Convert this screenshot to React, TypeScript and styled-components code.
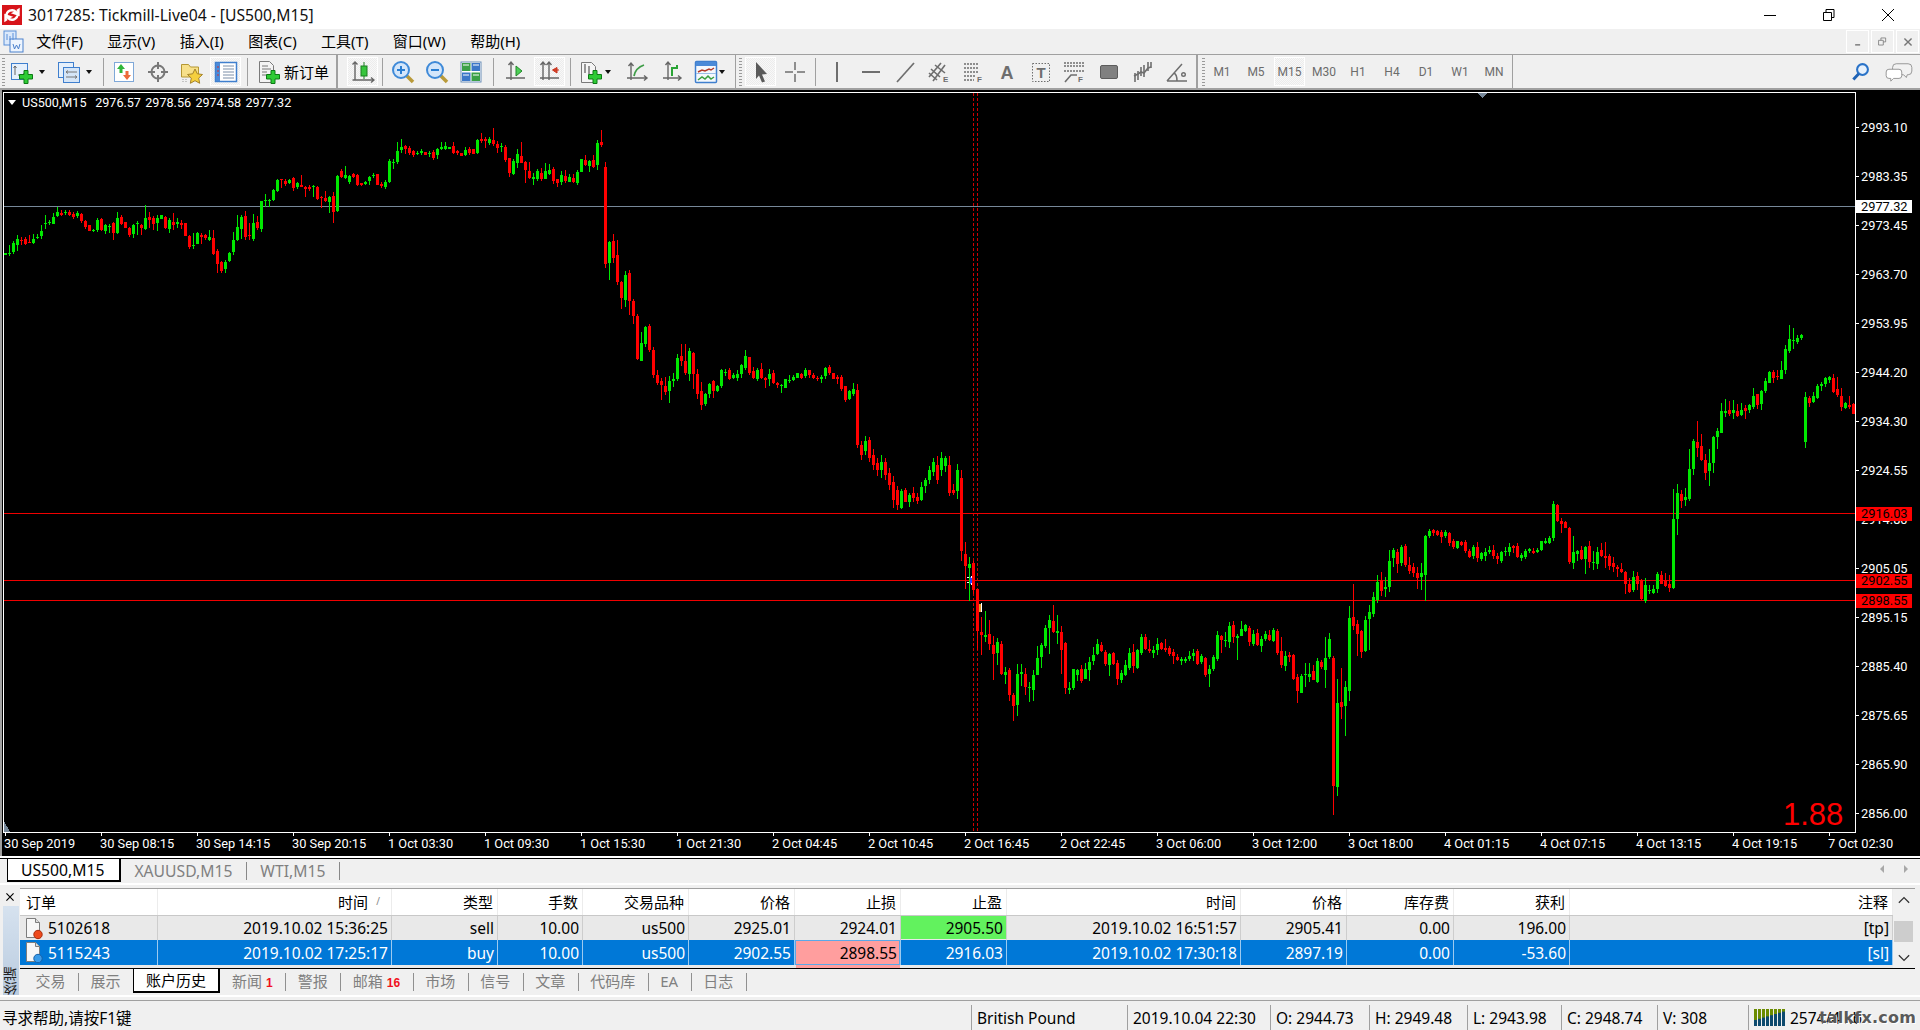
import React from 'react'
import styled, { createGlobalStyle } from 'styled-components'

const GlobalStyle = createGlobalStyle`
  html, body {
    margin: 0;
    padding: 0;
    background: #f0f0f0;
    overflow: hidden;
  }
  body {
    font-family: "Noto Sans", "Noto Sans CJK SC", sans-serif;
  }
`

/* ---------- chart data: body top-bottom, ^wick top, _wick bottom ---------- */

type Section = { k: number; y0: number; s: number; data: string }

const SECTIONS: Section[] = [
  { k: 0, y0: 90, s: 3, data: 'g490-495 g488-491^465_497 g458-487 g447-465^435_483 r449-451^440_465 r447-462^442_465 r456-460^435 g447-459^432 g441-445^432_447 g423-438^405_447 g399-401^375_417 g396-399^390_405 g381-401^370 g366-378^350 r369-374^360_378 g366-369^360_376 r366-375^360 r372-380^366 g369-378^363_384 r372-393^369_399 r393-412^390 r406-424 g419-424 g390-420^385 r388-420^385_423 g405-423^402_432 g408-411^402_429 r400-430^396_450 g384-428^366 r380-402^375_405 r396-414 r414-434^410_441 g405-432^402_444 g399-402^393_435 r406-413^403_435 g384-417^345_420 r382-390^366_414 r385-401^378_420 g383-400^375_423 g376-386 r381-413^378_417 g390-416^384_429 r397-404^369_420 g396-402^384_415 r398-405^390_417 r400-437 r438-471^435_477 g465-467^429_477 g429-461^426 r435-441^428_462 r435-444^431_450 g441-451^420_454 r444-491^420_495 r484-521^478_549 r516-543^512_549 g515-537^510_549 g489-513^486_516 g450-485^426_495 g411-450^375_453 g380-417^375_447 r378-441^363_450 r435-437^399_450 g399-447^372_453 r396-414^378_420 g333-417^332_426 g329-331^312_351 g329-332^326_351 g300-330^296 g270-303^267_306 r268-270^266_295 r273-283^268_288 g270-280^266_282 r264-293^261_303 g279-292^276_297 r286-290^255_291 r291-296^288_321 r291-296^285_303 g288-291^285_321 r291-327^288_330 r321-323^318_354 r325-332^303_336 g321-335^318_369 r318-366^306_399 g258-362^255_365 r243-261^238_264 g255-264^228_267 g258-275^255 r252-260^248_264 r255-284 r280-285^278_288 g276-282^272_285 g261-273^258_285 g255-259^249_264 r252-285 r282-288^276_294 g276-291 g213-276^208_279 g216-218^207_237 g183-216^156 g171-180^147_189 r168-178^165_192 r174-189 r183-195^180_201 g188-190^183_195 g184-190 r186-194 g188-190^183_201 r186-203 g178-195^174_207 g171-177^157_180 g168-177^156_180 g170-176 r168-189^156 r183-190^180_195 r188-197 g179-194^171_198 r177-190^171_195 r178-191 g150-189^147' },
  { k: 119, y0: 100, s: 3, data: 'r118-122^98_130 r117-122^112_143 g117-129^112_136 r119-132^84_137 r132-144^122_160 g138-140^130_155 r141-180 r174-219_230 g183-222^177 g162-190^148_204 r168-190^126 r186-209_248 r213-234^186_238 g232-237^220_254 g213-237^208_243 r220-237^205 g213-237^190 g210-221^192 r208-243_252 r237-248_260 g225-246^213_254 r228-243^210 g231-245^222 r234-246^222_250 g216-248 g177-215 r180-195^165 g183-198^180_216 r180-201^165_204 g129-195^120_210 r126-135^90_141 r201-492^186_504 g426-489_540 r423-474^402_489 r465-545^420_555 r546-594_627 g525-600^513_621 r519-603^510_645 r603-648^597_672 r648-778_781 g729-783^696 g681-732_741 r677-750 r750-825^741_834 r825-850^810_855 r843-855^834_900 r858-876^831_885 g843-873^828_909 g837-843^819_861 g774-837^762_843 r768-783^732_798 r783-819^732_825 g753-822^744_843 r759-822_867 r822-882^807_897 r873-915^846_930 g882-912_918 g852-882^849_894 r843-873^840_894 g858-873 g810-858^807_864 g816-818^807_828 r810-837^804 g825-834^819_837 g822-834^810_843 g795-822_834 g768-804^750 r771-819_825 r813-834^801_837 g810-837_843 r807-834^789_837 r834-840_864 g822-837^807_858 r819-849^810_852 r849-855_864 g854-856^852_879 g837-864 g839-842^825_849 g831-840^825_843 g819-834 r822-834 g810-828^804 r810-825_834 r825-834^819_837 r834-838 g831-836^825_849 g804-828^801_837 r801-819 r819-837 r831-837^825_852 r831-867 r858-900_906 g873-897^870_900 g867-882^849 r870-1035^852_1045' },
  { k: 214, y0: 0, s: 1, data: 'r445-455^441_460 g441-451^436_455 r440-458^437_462 r455-465^449_470 r463-470^458_476 g462-470^455_478 r462-475^458_480 r473-485^468_490 r482-500^476_508 r490-505^486_510' },
  { k: 224, y0: 480, s: 3, data: 'g33-84_88 r30-67^24 g45-66^39_81 r40-54^21_66 r51-63^39_72 g21-60^6 g0-18_39' },
  { k: 231, y0: 0, s: 1, data: 'g470-480^466_484 g462-472^458_476 r465-480^456_484 g458-470^452_476 g458-466^456_472 r465-493^456_496 r490-493^484_495 g470-491^464_499 r478-551^470_561' },
  { k: 240, y0: 560, s: 3, data: 'r-18-18^-54_87 g12-24^-9_123 r9-90_102 r87-213_270 r216-225^171_285 g225-231^153_246 r222-252^180_270 r255-282^228_360 g246-279^234_315 r252-342^243_345 g336-345^321_372 r330-405^324_423 r405-438^399_483 g342-435^312_468 g336-342^312_378 r342-381^324_405 g381-384^366_426 g345-390^330_423 g294-345^258 g255-291^249_324 g204-258^195_264 g180-204^165_282 r183-216^135_219 g213-219^165_252 r216-270^198_342 r249-384_402 g384-390^366_402 g327-384_390 g330-345^327_363 r327-363^315 g327-357^309 g306-330^291_363 g285-303^261_315 g252-282^237_285 r255-273^246 r276-312 g282-315^279_348 r279-312 r309-357^300_375 g339-360^330_369 g315-345^300 g279-324^264 r276-318^252_339 g270-324 g231-279^222 r231-267^222_270 r267-273^240_279 g270-279^258_294 g252-270^234_285 r249-267 r264-270^237 r264-282^258_288 r276-288^267_312 r291-300^282_303 g297-303^291_315 g297-303^291_309 g288-297^273 g279-288^267_303 r273-312^267 g288-306^282_312 r294-345^291_351 g327-342^315_381 g291-327_333 g225-297^213_303 r228-240^225_279 g239-241^216_261 g198-246^186_264 r195-231^183_249 g228-234^222_300 g207-228^183 g195-213^192 r204-246_258 g222-252^210_258 r219-255^207 g237-258^228_276 g222-237^213_243 r225-240^210 g210-243_246 r213-279^207_285 r273-315^231_324 g288-318^273_333 r285-291^276_306 r285-357 r351-393^342_429 g348-399^342 g341-343^309_381 g342-351^309_366 r333-360^315 g303-366^294 r306-321^300_327 g294-330^231_384 g237-291^219_297 r294-678_765 g429-681^357_708 r426-441^324_477 g381-438^363_528 g174-393^138_423 r171-198^72_210 r192-222^180_288 r213-276^210_294 g180-273^168_276 g156-177^135_270 g111-162^96_171 g66-120^45_129 r63-93^36_108 g81-87^51_111 g3-81^-30_96' },
  { k: 347, y0: 0, s: 1, data: 'g550-558_567 r552-564^549_573' },
  { k: 349, y0: 310, s: 3, data: 'g711-759^705_768 r708-765_771 r765-783^741_792 r771-789^759_801 r789-804^771_837 g789-801^759_840 g678-795^675_873 g663-678^657_684 r660-669^657_678 r663-675^660 r666-681_699 g666-678^660_684 r669-699^666_708 r693-711 g693-714_717 r696-705^693_708 r696-723 r723-741^717_744 g711-738^705_747 r711-744^696_756 g729-747^726_753 g726-738^714_753 g720-726^708_732 r720-738^705_747 r738-747^729_762 g726-753^723 g723-726^711_738 g711-726^699_738 r708-714^705_729 r708-741^699_744 g735-744^729_753 g723-741_747 g717-723^714_729 r723-729^714 g720-726^714_729 g693-720_723 g693-699^684_702 g684-699_702 g582-684^573_693 r585-633_636 r633-641^624_669 r636-654^633 r654-756^651_762 g726-759^678_777 g723-732^720_753 r720-747^708_750 g711-747^708_792 r708-756^693_774 g756-759^723_780 g726-762^711_777 r720-738^699_741 r738-744^696_774 r738-768_780 r759-771^741_786 r771-777^765_801 r777-786^759_789 r786-822^783_852 r822-846^804 g801-840^783 r798-822^786_840 r810-867_870 g825-873^804 g840-843^825_852 g837-849^825_852 g792-837_849 r795-822^783 r810-828^789 r822-834^795_846 g627-834^537_837 g549-627^522_675 r552-573^540_594 g561-570^534_588 g477-567^417_573 g393-477_495 r396-414^333_441 r408-450^372 r450-489^432_510 g459-483^417_528 g381-459^378_489 g363-381^354_417 g303-369^279 g303-309^267_321 r300-312^273 g300-309^270_327 r303-318^282 g300-315^279_318 r294-303^285_327 g285-300_309 g258-291^234 r252-285_297 g243-282^240_300 g213-243^204 g186-219^183 r186-204^180_219 r198-201^180_210 g180-207^153 g117-180^105_192 g87-123^45 g89-91^54_117 g84-96^75_102 g75-84^72_90 g261-396^246_414 r264-279^258_291 g258-276^246_279 g228-264^222_267 g222-228^216_243 g204-222^201_231 g201-210^198_219 r204-246^192_249 r237-255^201_261 r258-291^234_303 g279-294^276 r285-291^258 r282-312^279' },
]

type Candle = { x: number; up: boolean; top: number; height: number; hi: number; lo: number }

const CANDLES: Candle[] = SECTIONS.flatMap(({ k, y0, s, data }) =>
  data.split(' ').map((token, i) => {
    const m = token.match(/^([gr])(-?\d+)-(-?\d+)(?:\^(-?\d+))?(?:_(-?\d+))?$/)!
    const n = k + i
    const at = (v: number) => Math.round(y0 + v / s)
    const top = at(+m[2])
    const bottom = at(+m[3])
    const hi = m[4] !== undefined ? at(+m[4]) : top - (n * 7) % 3
    const lo = m[5] !== undefined ? at(+m[5]) : bottom + (n * 13) % 3
    return { x: 4 + 4 * n, up: m[1] === 'g', top, height: Math.max(1, bottom - top), hi, lo }
  }),
)

const PRICE_TICKS = ['2993.10', '2983.35', '2973.45', '2963.70', '2953.95', '2944.20', '2934.30', '2924.55', '2914.80', '2905.05', '2895.15', '2885.40', '2875.65', '2865.90', '2856.00']
const TIME_TICKS = ['30 Sep 2019', '30 Sep 08:15', '30 Sep 14:15', '30 Sep 20:15', '1 Oct 03:30', '1 Oct 09:30', '1 Oct 15:30', '1 Oct 21:30', '2 Oct 04:45', '2 Oct 10:45', '2 Oct 16:45', '2 Oct 22:45', '3 Oct 06:00', '3 Oct 12:00', '3 Oct 18:00', '4 Oct 01:15', '4 Oct 07:15', '4 Oct 13:15', '4 Oct 19:15', '7 Oct 02:30']
const RED_LEVELS = [
  { y: 513, label: '2916.03' },
  { y: 580, label: '2902.55' },
  { y: 600, label: '2898.55' },
]

/* ---------- window chrome ---------- */

const Page = styled.div`
  width: 1920px;
  height: 1030px;
  display: flex;
  flex-direction: column;
  overflow: hidden;
  background: #f0f0f0;
  color: #000;
`

const TitleBar = styled.div`
  height: 29px;
  background: #fff;
  display: flex;
  align-items: center;
  padding-left: 2px;
  flex-shrink: 0;
`

const TitleText = styled.span`
  margin-left: 6px;
  font-size: 15.7px;
  white-space: nowrap;
  color: #111;
`

const WindowButtons = styled.div`
  margin-left: auto;
  display: flex;
  padding-right: 3px;
`

const WindowButton = styled.div`
  width: 59px;
  height: 29px;
  display: flex;
  align-items: center;
  justify-content: center;
`

const MenuBar = styled.div`
  height: 25px;
  display: flex;
  align-items: center;
  flex-shrink: 0;
  padding-left: 3px;
`

const MenuItem = styled.span`
  padding: 0 12.2px;
  font-size: 15px;
  line-height: 25px;
  white-space: nowrap;
`

const MdiButtons = styled.div`
  margin-left: auto;
  display: flex;
  gap: 2px;
  padding-right: 1px;
`

const MdiButton = styled.div`
  width: 21px;
  height: 21px;
  border: 1px solid #fff;
  display: flex;
  align-items: center;
  justify-content: center;
`

const Toolbar = styled.div`
  height: 33px;
  border-top: 1px solid #a0a0a0;
  border-bottom: 2px solid #a0a0a0;
  display: flex;
  align-items: center;
  flex-shrink: 0;
`

const Grip = styled.div<{ $ml?: number }>`
  width: 3px;
  height: 28px;
  margin-left: ${(p) => p.$ml ?? 2}px;
  background: repeating-linear-gradient(to bottom, #9a9a9a 0 1px, transparent 1px 3px);
`

const Divider = styled.div<{ $ml: number; $double?: boolean }>`
  width: ${(p) => (p.$double ? 2 : 1)}px;
  height: 33px;
  margin-left: ${(p) => p.$ml}px;
  background: #a0a0a0;
`

const Sep = styled.div<{ $l: number; $r: number }>`
  width: 1px;
  height: 28px;
  margin: 0 ${(p) => p.$r}px 0 ${(p) => p.$l}px;
  background: #a0a0a0;
`

const Tool = styled.div<{ $active?: boolean; $ml?: number }>`
  box-sizing: border-box;
  width: ${(p) => (p.$active ? 31 : 34)}px;
  height: 29px;
  margin-left: ${(p) => (p.$ml ?? 0) + (p.$active ? 1 : 0)}px;
  margin-right: ${(p) => (p.$active ? 2 : 0)}px;
  display: flex;
  align-items: center;
  justify-content: center;
  flex-shrink: 0;
  font-family: Roboto, sans-serif;
  font-size: 12px;
  color: #6c6c6c;
  ${(p) =>
    p.$active &&
    `
    border: 1px solid #fff;
    background: repeating-conic-gradient(#f8f8f8 0 25%, #ececec 0 50%) 0 0 / 2px 2px;
  `}
`

const DropArrow = styled.div<{ $ml?: number }>`
  width: 0;
  height: 0;
  margin-left: ${(p) => p.$ml ?? 0}px;
  border: 3.5px solid transparent;
  border-top: 4px solid #111;
  border-bottom: 0;
  flex-shrink: 0;
`

const OrderTool = styled.div`
  width: 86px;
  height: 29px;
  display: flex;
  align-items: center;
  gap: 3px;
  padding-left: 9px;
  box-sizing: border-box;
  font-size: 15px;
  white-space: nowrap;
`

const ToolbarEnd = styled.div`
  margin-left: auto;
  display: flex;
  align-items: center;
  padding-right: 4px;
`

const Glyph = styled.svg`
  display: block;
  flex-shrink: 0;
`

/* ---------- chart ---------- */

const ChartFrame = styled.div`
  position: relative;
  height: 766px;
  flex-shrink: 0;
  background: #000;
`

const ChartSvg = styled.svg`
  display: block;
  width: 1920px;
  height: 766px;
  text {
    font-family: Roboto, sans-serif;
    font-size: 12.8px;
    fill: #fff;
    shape-rendering: auto;
  }
`

const Legend = styled.div`
  position: absolute;
  left: 8px;
  top: 5px;
  display: flex;
  align-items: center;
  gap: 6px;
  color: #fff;
  font-family: Roboto, sans-serif;
  font-size: 12.6px;
  line-height: 15px;
  word-spacing: 1.2px;
  white-space: pre;
`

const LegendMark = styled.span`
  width: 0;
  height: 0;
  border: 4.5px solid transparent;
  border-top: 5px solid #fff;
  border-bottom: 0;
`

/* ---------- chart tabs ---------- */

const ChartTabs = styled.div`
  height: 25px;
  flex-shrink: 0;
  border-top: 2px solid #fff;
  box-shadow: inset 0 1px 0 #000;
  display: flex;
  padding-left: 7px;
  font-size: 15.7px;
  position: relative;
`

const ChartTab = styled.div<{ $active?: boolean }>`
  box-sizing: border-box;
  padding: 0 15px 0 13px;
  height: 23px;
  margin-top: 1px;
  display: flex;
  align-items: center;
  white-space: nowrap;
  color: ${(p) => (p.$active ? '#000' : '#808080')};
  background: ${(p) => (p.$active ? '#fff' : 'transparent')};
  border-right: ${(p) => (p.$active ? '2px solid #000' : '0')};
  border-bottom: ${(p) => (p.$active ? '2px solid #000' : '0')};
  border-left: ${(p) => (p.$active ? '1px solid #000' : '0')};
  position: relative;
  &::after {
    content: '';
    display: ${(p) => (p.$active ? 'none' : 'block')};
    position: absolute;
    right: 0;
    top: 3px;
    height: 18px;
    width: 1px;
    background: #888;
  }
`

const ScrollArrows = styled.div`
  margin-left: auto;
  display: flex;
  align-items: center;
  gap: 20px;
  padding: 0 12px 4px 0;
`

const ArrowLeft = styled.span`
  border: 4px solid transparent;
  border-right: 4px solid #a8a8a8;
  border-left: 0;
`

const ArrowRight = styled.span`
  border: 4px solid transparent;
  border-left: 4px solid #a8a8a8;
  border-right: 0;
`

/* ---------- terminal ---------- */

const Terminal = styled.div`
  height: 110px;
  flex-shrink: 0;
  border-top: 2px solid #fff;
  border-bottom: 2px solid #fff;
  margin-bottom: 3px;
  display: flex;
`

const Rail = styled.div`
  width: 20px;
  flex-shrink: 0;
  padding-top: 3px;
  display: flex;
  flex-direction: column;
`

const RailClose = styled.div`
  height: 18px;
  display: flex;
  align-items: center;
  justify-content: center;
`

const RailTitle = styled.div`
  margin: 0 0 0 3px;
  width: 16px;
  height: 89px;
  background: linear-gradient(to top, #d6e2ef, #b9cbdf);
  display: flex;
  align-items: flex-start;
  justify-content: flex-start;
  writing-mode: vertical-rl;
  transform: rotate(180deg);
  font-size: 14px;
  line-height: 16px;
  color: #222;
`

const TerminalMain = styled.div`
  width: 1895px;
  padding-top: 3px;
  display: flex;
  flex-direction: column;
`

const TableArea = styled.div`
  height: 79px;
  flex-shrink: 0;
  display: flex;
  border-top: 1px solid #a0a0a0;
  border-bottom: 1px solid #000;
  overflow: hidden;
  font-size: 15.5px;
`

const TableBody = styled.div`
  width: 1873px;
  background: #e9e9e9;
`

const COLUMNS = '138px 234px 106px 85px 106px 106px 106px 106px 234px 106px 107px 116px 323px'

const HeaderRow = styled.div`
  height: 26px;
  display: grid;
  grid-template-columns: ${COLUMNS};
  background: #fff;
  border-bottom: 1px solid #c8c8c8;
`

const HeaderCell = styled.div<{ $left?: boolean; $pr?: number }>`
  display: flex;
  align-items: center;
  justify-content: ${(p) => (p.$left ? 'flex-start' : 'flex-end')};
  padding: 0 ${(p) => p.$pr ?? 4}px 2px 6px;
  font-size: 15px;
  border-right: 1px solid #ececec;
  position: relative;
`

const SortMark = styled.span`
  position: absolute;
  right: 11px;
  top: 5px;
  font-size: 10px;
  color: #888;
`

const Row = styled.div<{ $selected?: boolean; $h: number }>`
  height: ${(p) => p.$h}px;
  display: grid;
  grid-template-columns: ${COLUMNS};
  background: ${(p) => (p.$selected ? '#0078d7' : '#e9e9e9')};
  color: ${(p) => (p.$selected ? '#fff' : '#000')};
`

const Cell = styled.div<{ $left?: boolean; $tone?: 'green' | 'pink'; $selected?: boolean }>`
  display: flex;
  align-items: center;
  justify-content: ${(p) => (p.$left ? 'flex-start' : 'flex-end')};
  gap: 4px;
  padding: 0 3px 0 4px;
  white-space: nowrap;
  border-right: 1px solid ${(p) => (p.$selected ? '#9ccaf0' : '#cdcdcd')};
  ${(p) => p.$tone === 'green' && 'background: #62f25e; color: #000; border-bottom: 1px solid #e9e9e9;'}
  ${(p) => p.$tone === 'pink' && 'background: #ff9e9e; color: #000; box-shadow: inset 0 0 0 1px #5aa8e8;'}
`

const RowSpill = styled.div`
  height: 3px;
  display: grid;
  grid-template-columns: ${COLUMNS};
`

const SpillPink = styled.div`
  grid-column: 7;
  background: #ff9e9e;
  margin: 0 1px;
`

const ScrollBar = styled.div`
  width: 21px;
  display: flex;
  flex-direction: column;
  align-items: center;
  background: #f0f0f0;
  padding-top: 6px;
  box-sizing: border-box;
`

const ScrollThumb = styled.div`
  width: 19px;
  height: 21px;
  margin: 14px 0 9px;
  background: #cdcdcd;
`

const BottomTabs = styled.div`
  height: 25px;
  flex-shrink: 0;
  display: flex;
  padding-left: 3px;
  font-size: 15px;
`

const BottomTab = styled.div<{ $active?: boolean }>`
  box-sizing: border-box;
  height: 24px;
  padding: 0 ${(p) => (p.$active ? 11.5 : 12.5)}px 1px ${(p) => (p.$active ? 12 : 12.5)}px;
  display: flex;
  align-items: center;
  gap: 4px;
  white-space: nowrap;
  color: ${(p) => (p.$active ? '#000' : '#808080')};
  background: ${(p) => (p.$active ? '#fff' : 'transparent')};
  ${(p) => p.$active && 'border-right: 2px solid #000; border-bottom: 2px solid #000; border-left: 1px solid #000;'}
  position: relative;
  &::after {
    content: '';
    display: ${(p) => (p.$active ? 'none' : 'block')};
    position: absolute;
    right: -1px;
    top: 4px;
    height: 18px;
    width: 1px;
    background: #909090;
  }
`

const Badge = styled.span`
  color: #f01020;
  font-family: "Liberation Sans", sans-serif;
  font-weight: 700;
  font-size: 12px;
  padding-top: 4px;
`

const StatusBar = styled.div`
  height: 30px;
  flex-shrink: 0;
  border-top: 1px solid #a0a0a0;
  box-sizing: border-box;
  display: grid;
  grid-template-columns: 971px 156px 143px 99px 98px 94px 96px 91px 1fr;
  font-size: 15.5px;
  position: relative;
`

const StatusCell = styled.div<{ $first?: boolean }>`
  display: flex;
  align-items: center;
  gap: 5px;
  padding-left: ${(p) => (p.$first ? 2 : 5)}px;
  margin-top: 4px;
  height: 25px;
  white-space: nowrap;
  border-left: ${(p) => (p.$first ? '0' : '1px solid #a0a0a0')};
`

const Watermark = styled.div`
  position: absolute;
  right: 4px;
  top: 7px;
  font-family: "DejaVu Sans", sans-serif;
  font-weight: 700;
  font-size: 16px;
  letter-spacing: 0.2px;
  color: #5a5a5a;
  text-shadow: 1px 1px 0 #fff;
`

/* ---------- icons ---------- */

const Svg: React.FC<{ size?: number; children: React.ReactNode }> = ({ size = 24, children }) => (
  <Glyph width={size} height={size} viewBox="0 0 24 24">
    {children}
  </Glyph>
)

const Plus = () => <path d="M14 10.500h4v4h4.500v4.500h-4.500v4.500h-4v-4.500h-4.500v-4.500h4.500z" fill="#2ecb35" stroke="#0d7a16" strokeWidth="1" />

const AppLogo = () => (
  <Glyph width={20} height={20} viewBox="0 0 20 20">
    <rect width="20" height="20" fill="#d7141a" />
    <path d="M4.500 11a5.500 5.500 0 0 1 9.500-4l-2 1 4.500 1.500V5l-1.500 1M15.500 9a5.500 5.500 0 0 1-9.500 4l2-1-4.500-1.500V15l1.500-1" fill="none" stroke="#fff" strokeWidth="2.400" />
  </Glyph>
)

const MenuDoc = () => (
  <Glyph width={21} height={23} viewBox="0 0 21 23">
    <rect x="1" y="1" width="12" height="14" fill="#dbe9fb" stroke="#5b8fd8" />
    <rect x="7" y="9" width="13" height="13" fill="#eef5fe" stroke="#4a80cc" />
    <path d="M4 4v6M7 6v4M10 3v7" stroke="#5b8fd8" />
    <path d="M10 14l1.500 5 2-4 2 4 1.500-5" fill="none" stroke="#4a80cc" />
  </Glyph>
)

const IconNewChart = () => (
  <Svg>
    <rect x="1.500" y="3.500" width="16" height="16" fill="#e6f0fb" stroke="#3f7fce" />
    <path d="M5 6v9M3.500 8L5 6l1.500 2M8 15h7M13 13.500l2 1.500-2 1.500" fill="none" stroke="#666" />
    <Plus />
  </Svg>
)

const IconProfiles = () => (
  <Svg>
    <rect x="1.500" y="2.500" width="15" height="15" fill="#e6f0fb" stroke="#3f7fce" />
    <rect x="6.500" y="7.500" width="16" height="15" fill="#d5e5f7" stroke="#3f7fce" />
    <path d="M9 12h11M9 17h11M11 10.500L9 12l2 1.500M18 15.500l2 1.500-2 1.500" fill="none" stroke="#777" />
  </Svg>
)

const IconMarket = () => (
  <Svg>
    <rect x="2.500" y="2.500" width="19" height="19" fill="#fff" stroke="#7fa8d8" />
    <path d="M9 4l4 5h-2.500v4h-3V9H5z" fill="#2fb63a" />
    <path d="M15 20l-4-5h2.500v-4h3v4H19z" fill="#ec6a3a" />
  </Svg>
)

const IconNavigator = () => (
  <Svg>
    <circle cx="12" cy="12" r="6.500" fill="none" stroke="#787878" strokeWidth="2" />
    <path d="M12 2v7M12 15v7M2 12h7M15 12h7" stroke="#787878" strokeWidth="2" />
  </Svg>
)

const IconFavorites = () => (
  <Svg>
    <path d="M1.500 4.500h7l2 2.500h8v10h-17z" fill="#f7e08a" stroke="#b59733" />
    <path d="M15 9l2.300 4.800 5.200.7-3.800 3.600 1 5.200-4.700-2.600-4.700 2.600 1-5.200-3.800-3.600 5.200-.7z" fill="#f5cf3e" stroke="#a5832a" />
    <path d="M3 19v4M6 19v4" stroke="#999" strokeDasharray="1 1" />
  </Svg>
)

const IconTerminal = () => (
  <Svg>
    <rect x="1.500" y="2.500" width="21" height="19" fill="#fff" stroke="#3f7fce" strokeWidth="1.500" />
    <rect x="2" y="3" width="4" height="18" fill="#4a8ad8" />
    <path d="M9 6h11M9 9h11M9 12h11M9 15h11M9 18h11" stroke="#7a8ea8" />
    <path d="M3 7h2M3 11h2M3 15h2" stroke="#d23030" />
  </Svg>
)

const IconOrder = () => (
  <Svg>
    <path d="M2.500 1.500h10l4 4v17h-14z" fill="#f3f3f3" stroke="#7a7a7a" />
    <path d="M5 6h6M5 9h9M5 12h5M5 15h4" stroke="#777" />
    <Plus />
  </Svg>
)

const IconAutosize = () => (
  <Svg>
    <path d="M4 2v18M1.500 20H23M1.500 4.500L4 2l2.500 2.500M20 17.500l3 2.500-3 2.500" fill="none" stroke="#666" strokeWidth="1.400" />
    <rect x="10" y="6" width="6" height="10" fill="#36c53c" stroke="#1a7d20" />
    <path d="M13 2v4M13 16v3" stroke="#1a7d20" />
  </Svg>
)

const Magnifier: React.FC<{ plus?: boolean }> = ({ plus }) => (
  <Svg>
    <path d="M14.500 14.500L22 22" stroke="#b99a3a" strokeWidth="3.500" />
    <circle cx="10" cy="10" r="8" fill="#d4e6fa" stroke="#3f8ad8" strokeWidth="2" />
    <path d={plus ? 'M6 10h8M10 6v8' : 'M6 10h8'} stroke="#2a7ed2" strokeWidth="2" />
  </Svg>
)

const IconTile = () => (
  <Svg>
    <rect x="2" y="2" width="20" height="20" fill="#fff" stroke="#6c8fb8" />
    <rect x="3" y="3" width="8.500" height="8" fill="#3aa048" />
    <rect x="12.500" y="3" width="8.500" height="8" fill="#3c78c8" />
    <rect x="3" y="12.500" width="8.500" height="8.500" fill="#3c78c8" />
    <rect x="12.500" y="12.500" width="8.500" height="8.500" fill="#3aa048" />
    <path d="M4 5h6M14 5h6M4 15h6M14 15h6" stroke="#fff" />
  </Svg>
)

const IconShift = () => (
  <Svg>
    <path d="M8 2v18M3 18h19M5.500 5L8 2l2.500 3" fill="none" stroke="#666" strokeWidth="1.400" />
    <path d="M13 6l6 5-6 5z" fill="#4ccf56" stroke="#23892b" />
  </Svg>
)

const IconScroll = () => (
  <Svg>
    <path d="M5 2v18M11 2v18M2 18h19M2.500 5L5 2l2.500 3M8.500 5L11 2l2.500 3" fill="none" stroke="#666" strokeWidth="1.400" />
    <path d="M21 10h-5M19 7.500L14.500 10l4.500 3z" fill="#e04f2f" stroke="#c7311c" />
  </Svg>
)

const IconIndicator = () => (
  <Svg>
    <path d="M2.500 2.500h10l4 4v16h-14z" fill="#f5f5f5" stroke="#7a7a7a" />
    <path d="M6 4v9M10 6v8" stroke="#777" strokeWidth="1.500" />
    <Plus />
  </Svg>
)

const IconChartLine = () => (
  <Svg>
    <path d="M6 3v17M2 18h20M3.500 6L6 3l2.500 3M19 15.500l3 2.500-3 2.500" fill="none" stroke="#666" strokeWidth="1.400" />
    <path d="M9 16c1-5 4-9 10-11" fill="none" stroke="#3f9d48" strokeWidth="1.800" />
  </Svg>
)

const IconPeriod = () => (
  <Svg>
    <path d="M8 2v18M3 18h18M5.500 5L8 2l2.500 3M18 15.500l3 2.500-3 2.500" fill="none" stroke="#666" strokeWidth="1.400" />
    <path d="M12 16V8h5V5" fill="none" stroke="#2aa436" strokeWidth="2" />
  </Svg>
)

const IconTemplate = () => (
  <Svg>
    <rect x="1.500" y="1.500" width="21" height="21" rx="1" fill="#f4f8fd" stroke="#3f7fce" strokeWidth="1.500" />
    <rect x="2" y="2" width="20" height="4" fill="#4a8ad8" />
    <rect x="2" y="13" width="20" height="1" fill="#9bbfe8" />
    <path d="M4 12l4-2 3 1 4-2 2 1 3-2" fill="none" stroke="#b33a2a" strokeWidth="1.500" />
    <path d="M4 20l4-3 3 2 3-3 3 3 3-2" fill="none" stroke="#3aa040" strokeWidth="1.500" />
  </Svg>
)

const GRAY = '#6e6e6e'

const IconCursor = () => (
  <Svg>
    <path d="M7 2l11 12-5 .5 3 7-3 1-3-7L7 19z" fill="#5a5a5a" />
  </Svg>
)

const IconCross = () => (
  <Svg>
    <path d="M12 2v8M12 14v8M2 12h8M14 12h8" stroke={GRAY} strokeWidth="1.500" />
  </Svg>
)

const IconVLine = () => (
  <Svg>
    <path d="M12 2v20" stroke={GRAY} strokeWidth="2" />
  </Svg>
)

const IconHLine = () => (
  <Svg>
    <path d="M3 12h18" stroke={GRAY} strokeWidth="2" />
  </Svg>
)

const IconTrend = () => (
  <Svg>
    <path d="M4 22L21 3" stroke={GRAY} strokeWidth="1.700" />
  </Svg>
)

const SmallLetter = styled.text`
  font-family: "Liberation Sans", sans-serif;
  font-weight: 700;
  fill: #6e6e6e;
`

const IconChannel = () => (
  <Svg>
    <path d="M2 17L14 3M6 21L18 5M4 9l9 8M2 13l8 7M8 5l10 8" fill="none" stroke={GRAY} strokeWidth="1.600" />
    <SmallLetter x="16" y="22" fontSize="8">E</SmallLetter>
  </Svg>
)

const IconFibo = () => (
  <Svg>
    <path d="M3 4h15M3 8h15M3 12h15M3 16h12M3 20h10" stroke={GRAY} strokeDasharray="2 1" strokeWidth="1.400" />
    <SmallLetter x="16" y="22" fontSize="8">F</SmallLetter>
  </Svg>
)

const IconText = () => (
  <Svg>
    <SmallLetter x="12" y="19" fontSize="18" textAnchor="middle">A</SmallLetter>
  </Svg>
)

const IconLabel = () => (
  <Svg>
    <rect x="3.500" y="3.500" width="17" height="18" fill="none" stroke={GRAY} strokeDasharray="1.500 1.500" />
    <SmallLetter x="12" y="18" fontSize="15" textAnchor="middle">T</SmallLetter>
  </Svg>
)

const IconFiboFan = () => (
  <Svg>
    <path d="M1 3h20M1 6h20M1 11h20" stroke={GRAY} strokeDasharray="2 1" strokeWidth="1.400" />
    <path d="M2 22l6-7h6" fill="none" stroke={GRAY} strokeWidth="1.600" />
    <SmallLetter x="15" y="22" fontSize="8">F</SmallLetter>
  </Svg>
)

const IconRect = () => (
  <Svg>
    <rect x="3.500" y="5.500" width="17" height="13" rx="1.500" fill="#808080" stroke="#5c5c5c" />
  </Svg>
)

const IconElliott = () => (
  <Svg>
    <path d="M4 22V13M7 20V11M10 16V7M13 17V5M17 11V2M20 8V2" stroke={GRAY} strokeWidth="1.600" />
    <path d="M3 16l4-2 3-2 3 1 4-5 3-1" fill="none" stroke={GRAY} strokeWidth="1.600" />
  </Svg>
)

const IconAngle = () => (
  <Svg>
    <path d="M2 21h20M2 21L17 4M9 13c2 1 3 4 3 8" fill="none" stroke={GRAY} strokeWidth="1.500" />
    <circle cx="18.500" cy="14.500" r="1.800" fill="none" stroke={GRAY} strokeWidth="1.400" />
  </Svg>
)

const IconSearch = () => (
  <Svg size={20}>
    <circle cx="15" cy="9" r="6.500" fill="#e7f1fc" stroke="#2a73c8" strokeWidth="2.500" />
    <path d="M10.500 14L4 21" stroke="#1f62b4" strokeWidth="3.500" />
  </Svg>
)

const IconChat = () => (
  <Glyph width={28} height={22} viewBox="0 0 30 24">
    <path d="M12 3h13a4 4 0 0 1 4 4v4a4 4 0 0 1-4 4h-1l-1 3-3-3h-8a4 4 0 0 1-4-4V7a4 4 0 0 1 4-4z" fill="#f2f2f2" stroke="#8f8f8f" />
    <path d="M4 9h11a3 3 0 0 1 3 3v4a3 3 0 0 1-3 3H9l-3 3v-3H4a3 3 0 0 1-3-3v-4a3 3 0 0 1 3-3z" fill="#fff" stroke="#8f8f8f" />
  </Glyph>
)

const OrderDoc: React.FC<{ dot: string; dotEdge: string }> = ({ dot, dotEdge }) => (
  <Glyph width={20} height={23} viewBox="0 0 20 23">
    <path d="M2.500 1.500h9l4 4v15h-13z" fill="#f7f7f7" stroke="#7d7d7d" />
    <path d="M11.500 1.500v4h4" fill="#ddd" stroke="#7d7d7d" />
    <circle cx="14" cy="17.500" r="4.200" fill={dot} stroke={dotEdge} />
  </Glyph>
)

const LineIcon: React.FC<{ d: string; size?: number; width?: number; color?: string }> = ({ d, size = 14, width = 1, color = '#000' }) => (
  <Glyph width={size} height={size} viewBox="0 0 14 14">
    <path d={d} fill="none" stroke={color} strokeWidth={width} />
  </Glyph>
)

const SignalBars = () => (
  <Glyph width={31} height={17} viewBox="0 0 31 17">
    {[0, 1, 2, 3, 4, 5, 6, 7].map((i) => (
      <g key={i}>
        <rect x={i * 4} y={0} width={3} height={17} fill="#6b8c00" />
        <rect x={i * 4} y={11 - i * 1.200} width={3} height={6 + i * 1.200} fill="#0d4a6e" />
      </g>
    ))}
  </Glyph>
)

/* ---------- page parts ---------- */

const MENU = ['文件(F)', '显示(V)', '插入(I)', '图表(C)', '工具(T)', '窗口(W)', '帮助(H)']
const PERIODS = ['M1', 'M5', 'M15', 'M30', 'H1', 'H4', 'D1', 'W1', 'MN']
const CHART_TABS = ['US500,M15', 'XAUUSD,M15', 'WTI,M15']

const HEADERS = ['订单', '时间', '类型', '手数', '交易品种', '价格', '止损', '止盈', '时间', '价格', '库存费', '获利', '注释']
const ROW_SELL = ['2019.10.02 15:36:25', 'sell', '10.00', 'us500', '2925.01', '2924.01', '2905.50', '2019.10.02 16:51:57', '2905.41', '0.00', '196.00', '[tp]']
const ROW_BUY = ['2019.10.02 17:25:17', 'buy', '10.00', 'us500', '2902.55', '2898.55', '2916.03', '2019.10.02 17:30:18', '2897.19', '0.00', '-53.60', '[sl]']

const BOTTOM_TABS: { label: string; badge?: string; active?: boolean }[] = [
  { label: '交易' },
  { label: '展示' },
  { label: '账户历史', active: true },
  { label: '新闻', badge: '1' },
  { label: '警报' },
  { label: '邮箱', badge: '16' },
  { label: '市场' },
  { label: '信号' },
  { label: '文章' },
  { label: '代码库' },
  { label: 'EA' },
  { label: '日志' },
]

const STATUS = ['British Pound', '2019.10.04 22:30', 'O: 2944.73', 'H: 2949.48', 'L: 2943.98', 'C: 2948.74', 'V: 308']

const MainToolbar: React.FC = () => (
  <Toolbar>
    <Grip />
    <Tool><IconNewChart /></Tool>
    <DropArrow />
    <Tool $ml={7}><IconProfiles /></Tool>
    <DropArrow />
    <Sep $l={11} $r={3} />
    <Tool><IconMarket /></Tool>
    <Tool><IconNavigator /></Tool>
    <Tool><IconFavorites /></Tool>
    <Tool $active><IconTerminal /></Tool>
    <Sep $l={4} $r={0} />
    <OrderTool><IconOrder />新订单</OrderTool>
    <Divider $ml={2} $double />
    <Tool $active $ml={8}><IconAutosize /></Tool>
    <Sep $l={2} $r={3} />
    <Tool><Magnifier plus /></Tool>
    <Tool><Magnifier /></Tool>
    <Tool><IconTile /></Tool>
    <Sep $l={5} $r={4} />
    <Tool><IconShift /></Tool>
    <Tool $active $ml={1}><IconScroll /></Tool>
    <Sep $l={3} $r={3} />
    <Tool><IconIndicator /></Tool>
    <DropArrow $ml={-3} />
    <Tool $ml={9}><IconChartLine /></Tool>
    <Tool $ml={1}><IconPeriod /></Tool>
    <Tool><IconTemplate /></Tool>
    <DropArrow $ml={-4} />
    <Divider $ml={10} />
    <Grip $ml={3} />
    <Tool $active $ml={2}><IconCursor /></Tool>
    <Tool><IconCross /></Tool>
    <Sep $l={3} $r={4} />
    <Tool><IconVLine /></Tool>
    <Tool><IconHLine /></Tool>
    <Tool><IconTrend /></Tool>
    <Tool><IconChannel /></Tool>
    <Tool><IconFibo /></Tool>
    <Tool><IconText /></Tool>
    <Tool><IconLabel /></Tool>
    <Tool><IconFiboFan /></Tool>
    <Tool><IconRect /></Tool>
    <Tool><IconElliott /></Tool>
    <Tool><IconAngle /></Tool>
    <Divider $ml={2} $double />
    <Grip $ml={4} />
    {PERIODS.map((p) => (
      <Tool key={p} $active={p === 'M15'}>{p}</Tool>
    ))}
    <Divider $ml={1} />
    <ToolbarEnd>
      <Tool><IconSearch /></Tool>
      <Tool $ml={5}><IconChat /></Tool>
    </ToolbarEnd>
  </Toolbar>
)

const PriceChart: React.FC = () => (
  <ChartFrame>
    <ChartSvg viewBox="0 90 1920 766" shapeRendering="crispEdges">
      <rect x="0" y="90" width="2" height="766" fill="#a0a0a0" />
      <path d="M3.500 833V92.500H1855.500V833M3 832.500H1856" fill="none" stroke="#fff" />
      <path d="M973.500 93V832M977.500 93V832" stroke="#d00000" strokeDasharray="3 2" />
      <path d="M4 206.500H1855" stroke="#778899" />
      {RED_LEVELS.map((l) => (
        <path key={l.y} d={`M4 ${l.y + 0.5}H1855`} stroke="#f00000" />
      ))}
      {CANDLES.map((c) => (
        <g key={c.x} fill={c.up ? '#00e800' : '#ff0000'}>
          <rect x={c.x + 1} y={c.hi} width={1} height={c.lo - c.hi} />
          <rect x={c.x} y={c.top} width={3} height={c.height} />
        </g>
      ))}
      <polygon points="1477,93 1487,93 1482,98" fill="#778899" />
      <polygon points="4,821 4,832 10,832" fill="#778899" />
      <rect x="967" y="577" width="2" height="1" fill="#fff" />
      <rect x="967" y="582" width="2" height="1" fill="#fff" />
      <rect x="970" y="577" width="2" height="7" fill="#2040ff" />
      <rect x="971" y="576" width="1" height="2" fill="#fff" />
      <rect x="971" y="583" width="1" height="2" fill="#fff" />
      <rect x="979" y="604" width="2" height="8" fill="#e09a30" />
      <rect x="981" y="603" width="1" height="9" fill="#fff" />
      {PRICE_TICKS.map((label, i) => (
        <g key={label}>
          <rect x="1856" y={127 + 49 * i} width="3" height="1" fill="#fff" />
          <text x="1861" y={132 + 49 * i}>{label}</text>
        </g>
      ))}
      {TIME_TICKS.map((label, i) => (
        <g key={label}>
          <rect x={5 + 96 * i} y="833" width="1" height="3" fill="#fff" />
          <text x={4 + 96 * i} y="848">{label}</text>
        </g>
      ))}
      <rect x="1856" y="200" width="56" height="13" fill="#fff" />
      <text x="1861" y="211" style={{ fill: '#000' }}>2977.32</text>
      {RED_LEVELS.map((l) => (
        <g key={l.label}>
          <rect x="1856" y={l.y - 6} width="56" height="14" fill="#ff0000" />
          <text x="1861" y={l.y + 5} style={{ fill: '#000' }}>{l.label}</text>
        </g>
      ))}
      <text x="1783" y="825" style={{ fill: '#ff0000', fontFamily: '"Liberation Sans", sans-serif', fontSize: 31 }}>1.88</text>
    </ChartSvg>
    <Legend>
      <LegendMark />
      {'US500,M15  2976.57 2978.56 2974.58 2977.32'}
    </Legend>
  </ChartFrame>
)

const OrderRow: React.FC<{ id: string; cells: string[]; selected?: boolean; h: number }> = ({ id, cells, selected, h }) => (
  <Row $selected={selected} $h={h}>
    <Cell $left $selected={selected}>
      <OrderDoc dot={selected ? '#3a9be8' : '#ee4a1c'} dotEdge={selected ? '#1560a8' : '#a82c0c'} />
      {id}
    </Cell>
    {cells.map((value, i) => (
      <Cell
        key={i}
        $selected={selected}
        $tone={!selected && i === 6 ? 'green' : selected && i === 5 ? 'pink' : undefined}
      >
        {value}
      </Cell>
    ))}
  </Row>
)

const App: React.FC = () => (
  <Page>
    <GlobalStyle />
    <TitleBar>
      <AppLogo />
      <TitleText>3017285: Tickmill-Live04 - [US500,M15]</TitleText>
      <WindowButtons>
        <WindowButton><LineIcon d="M1 7.500h12" /></WindowButton>
        <WindowButton><LineIcon d="M1.500 4.500h8v8h-8zM4 4.500v-3h8v8h-2.500" /></WindowButton>
        <WindowButton><LineIcon d="M1 1l12 12M13 1L1 13" /></WindowButton>
      </WindowButtons>
    </TitleBar>
    <MenuBar>
      <MenuDoc />
      {MENU.map((m) => (
        <MenuItem key={m}>{m}</MenuItem>
      ))}
      <MdiButtons>
        <MdiButton><LineIcon size={10} width={2} color="#777" d="M3 11h7" /></MdiButton>
        <MdiButton><LineIcon size={11} color="#777" d="M2 5.500h6v6h-6zM5 5.500v-3h6v5h-3" /></MdiButton>
        <MdiButton><LineIcon size={10} width={2} color="#777" d="M2 2l10 10M12 2L2 12" /></MdiButton>
      </MdiButtons>
    </MenuBar>
    <MainToolbar />
    <PriceChart />
    <ChartTabs>
      {CHART_TABS.map((t, i) => (
        <ChartTab key={t} $active={i === 0}>{t}</ChartTab>
      ))}
      <ScrollArrows>
        <ArrowLeft />
        <ArrowRight />
      </ScrollArrows>
    </ChartTabs>
    <Terminal>
      <Rail>
        <RailClose><LineIcon size={10} width={1.600} d="M2 2l10 10M12 2L2 12" /></RailClose>
        <RailTitle>终端</RailTitle>
      </Rail>
      <TerminalMain>
        <TableArea>
          <TableBody>
            <HeaderRow>
              {HEADERS.map((h, i) => (
                <HeaderCell key={i} $left={i === 0} $pr={i === 1 ? 23 : undefined}>
                  {h}
                  {i === 1 && <SortMark>/</SortMark>}
                </HeaderCell>
              ))}
            </HeaderRow>
            <OrderRow id="5102618" cells={ROW_SELL} h={24} />
            <OrderRow id="5115243" cells={ROW_BUY} h={25} selected />
            <RowSpill><SpillPink /></RowSpill>
          </TableBody>
          <ScrollBar>
            <LineIcon size={12} width={1.500} color="#333" d="M1 9l6-6 6 6" />
            <ScrollThumb />
            <LineIcon size={12} width={1.500} color="#333" d="M1 5l6 6 6-6" />
          </ScrollBar>
        </TableArea>
        <BottomTabs>
          {BOTTOM_TABS.map((t) => (
            <BottomTab key={t.label} $active={t.active}>
              {t.label}
              {t.badge && <Badge>{t.badge}</Badge>}
            </BottomTab>
          ))}
        </BottomTabs>
      </TerminalMain>
    </Terminal>
    <StatusBar>
      <StatusCell $first>寻求帮助,请按F1键</StatusCell>
      {STATUS.map((s) => (
        <StatusCell key={s}>{s}</StatusCell>
      ))}
      <StatusCell>
        <SignalBars />
        2574/4 kb
      </StatusCell>
      <Watermark>talkfx.com</Watermark>
    </StatusBar>
  </Page>
)

export default App
